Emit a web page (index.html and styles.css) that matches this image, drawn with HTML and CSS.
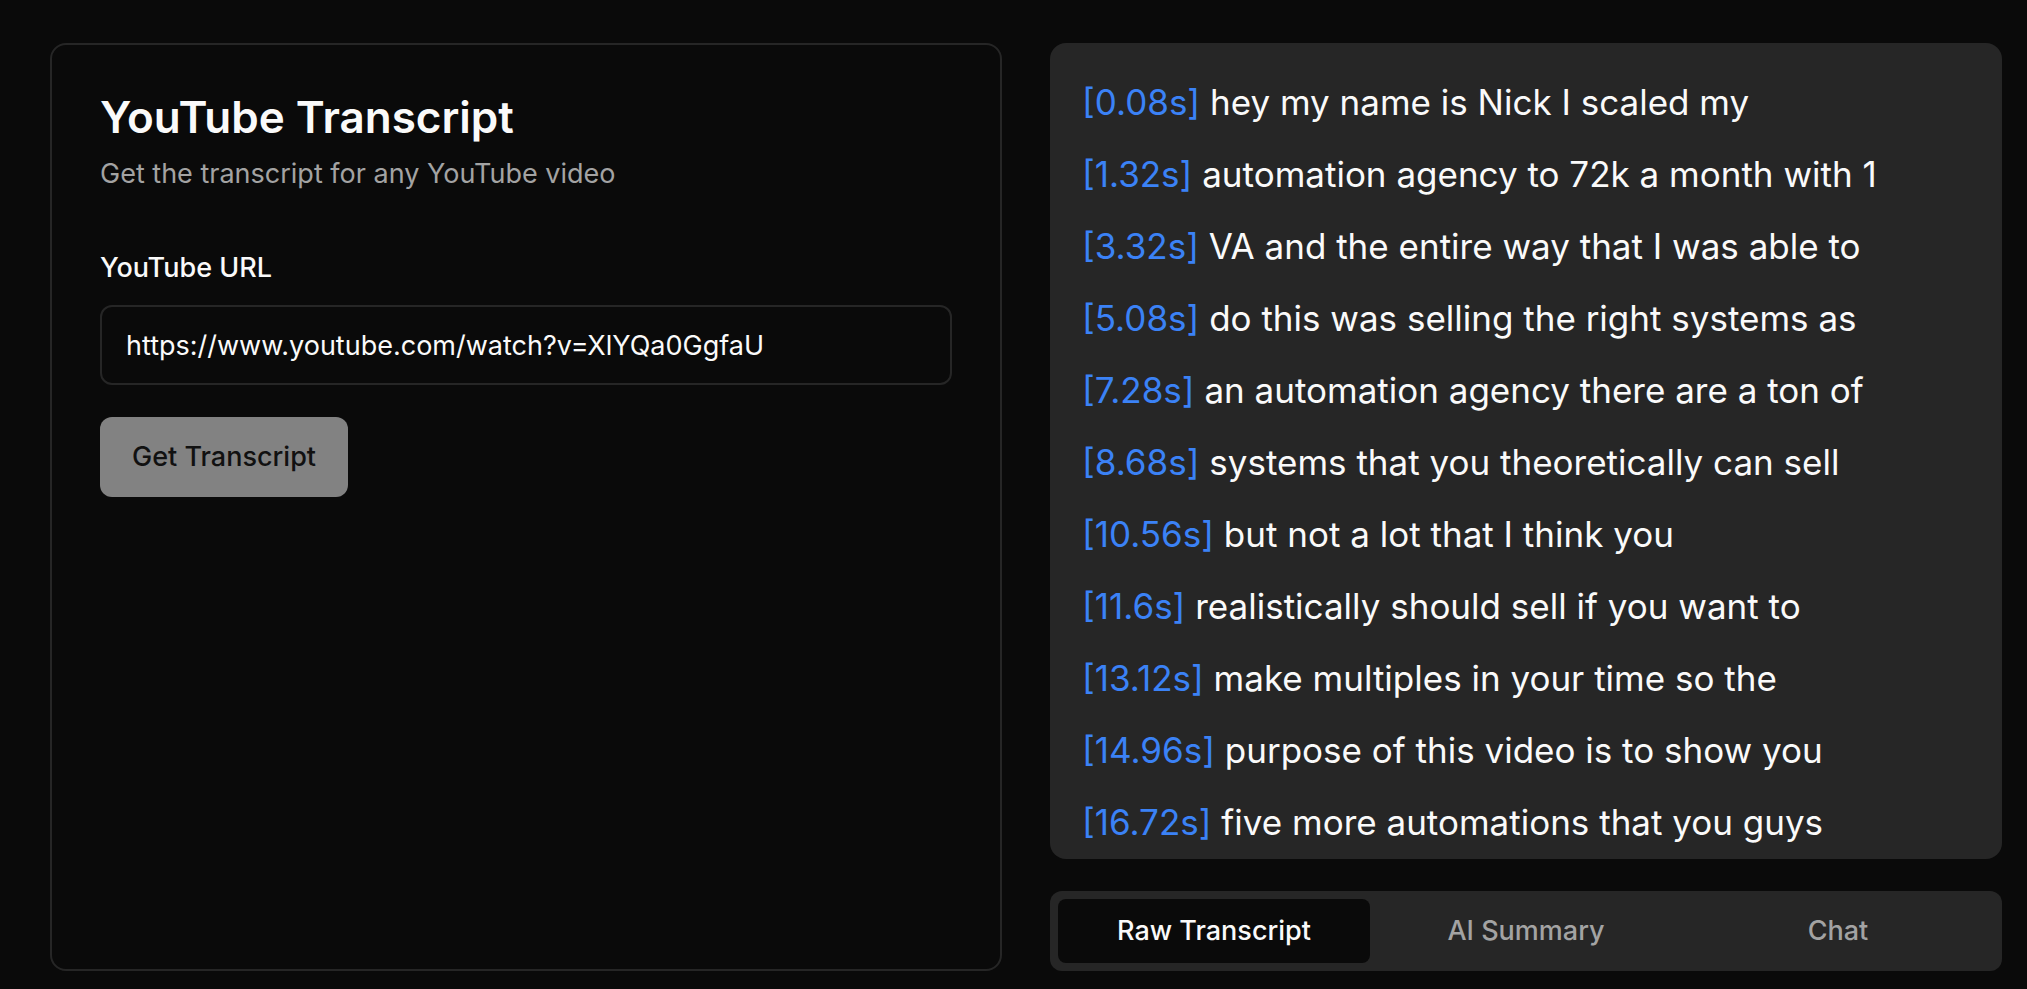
FILE: index.html
```html
<!DOCTYPE html>
<html lang="en">
<head>
<meta charset="utf-8">
<meta name="viewport" content="width=device-width, initial-scale=1">
<title>YouTube Transcript</title>
<link rel="stylesheet" href="styles.css">
</head>
<body>
<main class="layout">
  <section class="card">
    <header class="card-header">
      <h1 class="card-title">YouTube Transcript</h1>
      <p class="card-description">Get the transcript for any YouTube video</p>
    </header>
    <form class="form">
      <label class="label" for="url">YouTube URL</label>
      <input class="input" id="url" type="text" value="https://www.youtube.com/watch?v=XlYQa0GgfaU">
      <button class="submit" type="submit" disabled>Get Transcript</button>
    </form>
  </section>
  <section class="viewer">
    <div class="transcript">
      <p class="line"><span class="time">[0.08s]</span> hey my name is Nick I scaled my</p>
      <p class="line"><span class="time">[1.32s]</span> automation agency to 72k a month with 1</p>
      <p class="line"><span class="time">[3.32s]</span> VA and the entire way that I was able to</p>
      <p class="line"><span class="time">[5.08s]</span> do this was selling the right systems as</p>
      <p class="line"><span class="time">[7.28s]</span> an automation agency there are a ton of</p>
      <p class="line"><span class="time">[8.68s]</span> systems that you theoretically can sell</p>
      <p class="line"><span class="time">[10.56s]</span> but not a lot that I think you</p>
      <p class="line"><span class="time">[11.6s]</span> realistically should sell if you want to</p>
      <p class="line"><span class="time">[13.12s]</span> make multiples in your time so the</p>
      <p class="line"><span class="time">[14.96s]</span> purpose of this video is to show you</p>
      <p class="line"><span class="time">[16.72s]</span> five more automations that you guys</p>
    </div>
    <div class="tabs" role="tablist">
      <button class="tab tab-active" type="button" role="tab" aria-selected="true">Raw Transcript</button>
      <button class="tab" type="button" role="tab" aria-selected="false">AI Summary</button>
      <button class="tab" type="button" role="tab" aria-selected="false">Chat</button>
    </div>
  </section>
</main>
</body>
</html>
```
FILE: styles.css
```css
*, *::before, *::after { box-sizing: border-box; }

body {
  margin: 0;
  background: #0a0a0a;
  color: #fafafa;
  font-family: Inter, "Liberation Sans", sans-serif;
  font-size: 27px;
  line-height: 42px;
}

h1, p { margin: 0; }

button, input { font: inherit; }

.layout {
  display: grid;
  grid-template-columns: 1fr 1fr;
  gap: 48px;
  height: 100vh;
  padding: 43px 25px 18px 50px;
}

.card {
  display: flex;
  flex-direction: column;
  gap: 52px;
  padding: 48px;
  border: 2px solid #262626;
  border-radius: 16px;
}

.card-header {
  display: flex;
  flex-direction: column;
  gap: 12px;
}

.card-title {
  font-size: 44px;
  line-height: 48px;
  font-weight: 600;
}

.card-description { color: #a3a3a3; }

.form {
  display: flex;
  flex-direction: column;
  align-items: flex-start;
}

.label {
  margin-bottom: 16px;
  font-weight: 500;
}

.input {
  width: 100%;
  height: 80px;
  padding: 0 24px;
  border: 2px solid #262626;
  border-radius: 12px;
  background: transparent;
  color: inherit;
}

.submit {
  height: 80px;
  margin-top: 32px;
  padding: 0 32px;
  border: 0;
  border-radius: 12px;
  background: #828282;
  color: #111111;
  font-weight: 500;
}

.viewer {
  display: flex;
  flex-direction: column;
  gap: 32px;
  min-height: 0;
}

.transcript {
  flex: 1;
  min-height: 0;
  padding: 32px;
  overflow: hidden;
  border-radius: 16px;
  background: #262626;
  font-size: 35px;
  line-height: 54px;
}

.line { margin-bottom: 18px; }

.time { color: #3b82f6; }

.tabs {
  display: grid;
  grid-template-columns: repeat(3, 1fr);
  padding: 8px;
  border-radius: 12px;
  background: #262626;
}

.tab {
  height: 64px;
  padding: 0 24px;
  border: 0;
  border-radius: 8px;
  background: transparent;
  color: #a3a3a3;
  font-weight: 500;
}

.tab-active {
  background: #0a0a0a;
  color: #fafafa;
}
```
